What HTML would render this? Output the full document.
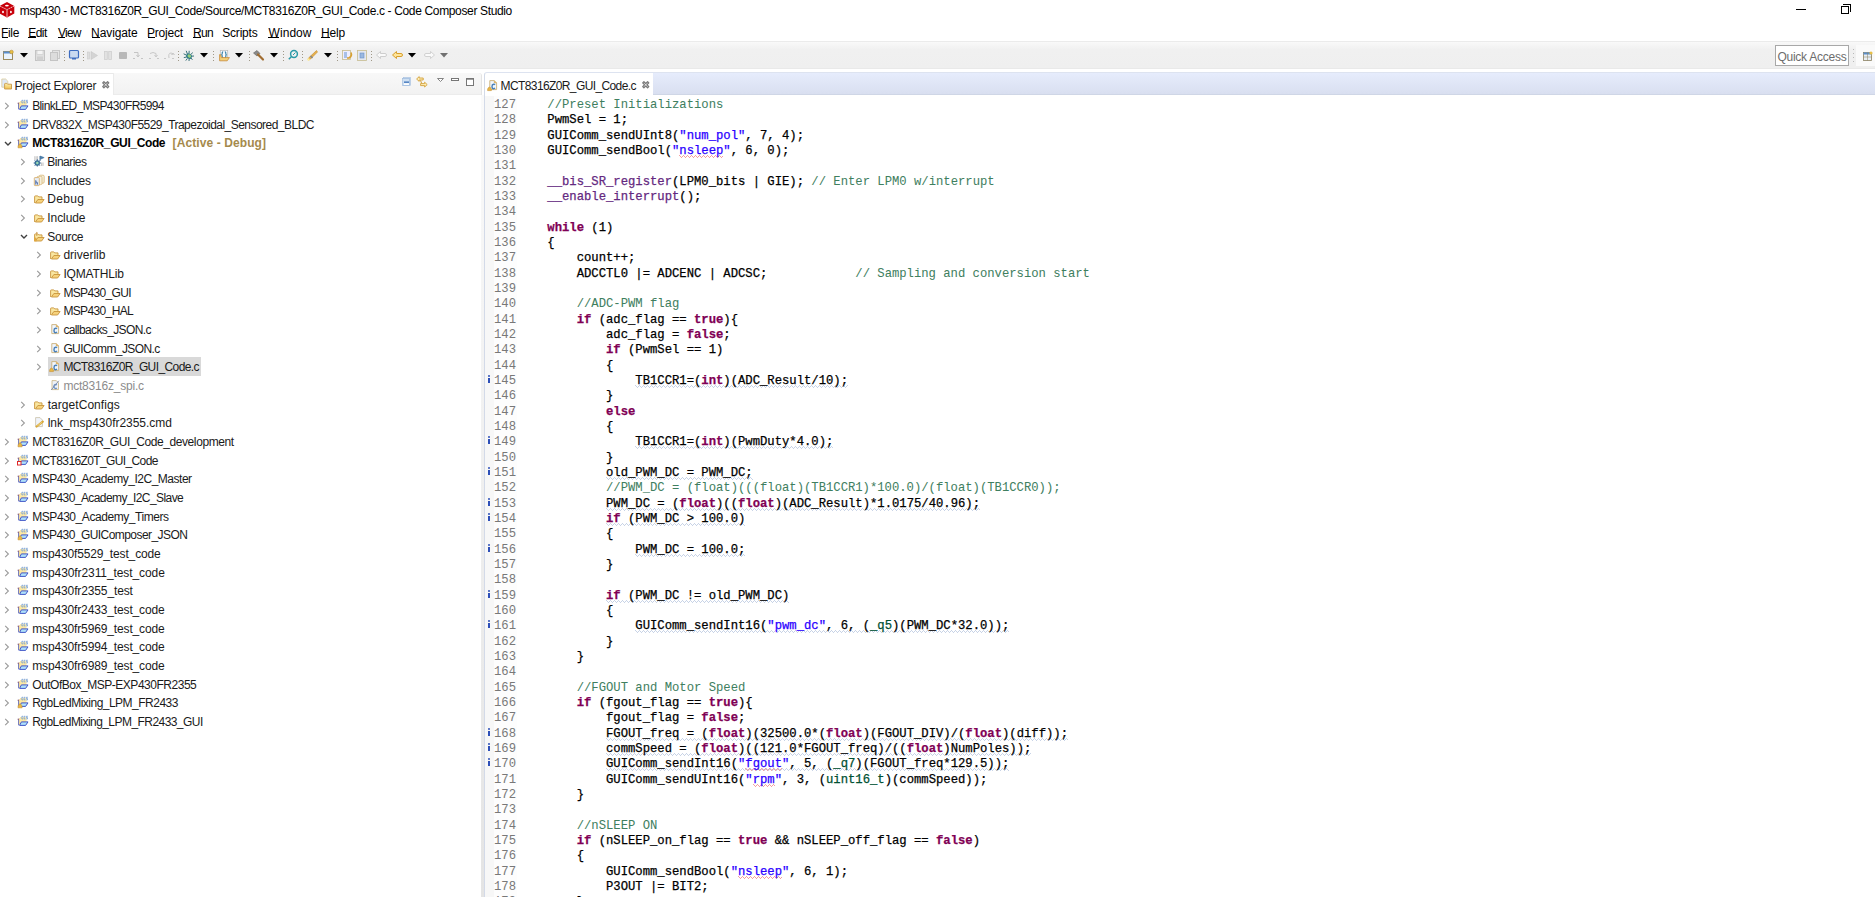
<!DOCTYPE html><html><head><meta charset="utf-8"><title>CCS</title><style>
*{margin:0;padding:0;box-sizing:border-box}
html,body{width:1875px;height:897px;overflow:hidden;background:#fff;position:relative}
body{font-family:"Liberation Sans",sans-serif;font-size:12px;color:#000}
.a{position:absolute;white-space:pre}
.ui{font-family:"Liberation Sans",sans-serif;font-size:12px;line-height:14px}
.code{font-family:"Liberation Mono",monospace;font-size:12.2222px;line-height:15.3333px;color:#000;-webkit-text-stroke:0.25px currentColor}
.k{color:#7f0055;font-weight:bold}
.s{color:#2a00ff}
.c{color:#3f7f5f;-webkit-text-stroke-width:0.05px}
.t{color:#005032}
.m{color:#642880}
.ln{font-family:"Liberation Mono",monospace;font-size:12.2222px;line-height:15.3333px;color:#787878;text-align:right;width:40px}
.u{text-decoration:underline wavy #b4c4dc;text-decoration-thickness:1px;text-underline-offset:2px;text-decoration-skip-ink:none}
.r{text-decoration:underline wavy #f08080;text-decoration-thickness:1px;text-underline-offset:2px;text-decoration-skip-ink:none}
.mu{text-decoration:underline;text-underline-offset:0px}
svg{position:absolute;overflow:visible}
</style></head><body><svg style="left:0;top:0" width="16" height="19" viewBox="0 0 16 19">
<path d="M7 2 L14.3 5.9 L14.3 13.6 L7 17.6 L-0.3 13.6 L-0.3 5.9 Z" fill="#c8000a"/>
<path d="M0.3 6.3 L7 9.6 L13.7 6.3" stroke="#fff" stroke-width="1" stroke-dasharray="1.3 1" fill="none"/>
<path d="M7 9.8 L7 17.4" stroke="#e89090" stroke-width="1.3"/>
<ellipse cx="6.9" cy="5.6" rx="1.9" ry="0.85" fill="#fff"/>
<ellipse cx="3" cy="12" rx="0.9" ry="1.3" fill="#fff"/>
<ellipse cx="10.9" cy="12" rx="0.9" ry="1.3" fill="#fff"/>
</svg><div class="a ui" id="title" style="left:19.80px;top:4.000px;letter-spacing:-0.351px;">msp430 - MCT8316Z0R_GUI_Code/Source/MCT8316Z0R_GUI_Code.c - Code Composer Studio</div><div class="a" style="left:1796px;top:9px;width:10px;height:1px;background:#000"></div><div class="a" style="left:1841px;top:6px;width:8px;height:8px;border:1px solid #000;background:#fff"></div><div class="a" style="left:1843px;top:4px;width:8px;height:1px;background:#000"></div><div class="a" style="left:1850px;top:4px;width:1px;height:8px;background:#000"></div><div class="a ui" id="menu0" style="left:1.00px;top:26.000px;letter-spacing:-0.334px;">File</div><div class="a" style="left:2px;top:37px;width:6px;height:1px;background:#000"></div><div class="a ui" id="menu1" style="left:28.20px;top:26.000px;letter-spacing:-0.500px;">Edit</div><div class="a" style="left:28px;top:37px;width:8px;height:1px;background:#000"></div><div class="a ui" id="menu2" style="left:58.10px;top:26.000px;letter-spacing:-0.800px;">View</div><div class="a" style="left:58px;top:37px;width:7px;height:1px;background:#000"></div><div class="a ui" id="menu3" style="left:91.10px;top:26.000px;letter-spacing:-0.101px;">Navigate</div><div class="a" style="left:92px;top:37px;width:8px;height:1px;background:#000"></div><div class="a ui" id="menu4" style="left:147.00px;top:26.000px;letter-spacing:-0.200px;">Project</div><div class="a" style="left:148px;top:37px;width:7px;height:1px;background:#000"></div><div class="a ui" id="menu5" style="left:192.90px;top:26.000px;letter-spacing:-0.650px;">Run</div><div class="a" style="left:193px;top:37px;width:8px;height:1px;background:#000"></div><div class="a ui" id="menu6" style="left:222.30px;top:26.000px;letter-spacing:-0.217px;">Scripts</div><div class="a ui" id="menu7" style="left:268.60px;top:26.000px;letter-spacing:0.040px;">Window</div><div class="a" style="left:268px;top:37px;width:11px;height:1px;background:#000"></div><div class="a ui" id="menu8" style="left:320.90px;top:26.000px;letter-spacing:-0.100px;">Help</div><div class="a" style="left:321px;top:37px;width:9px;height:1px;background:#000"></div><div class="a" style="left:0;top:41px;width:1875px;height:28px;border-top:1px solid #ebebeb;border-bottom:1px solid #e9e9e9;background:linear-gradient(#f9f9f9,#f0f0f0 30%,#efefef)"></div><div class="a" style="left:0;top:69px;width:1875px;height:4px;background:#fff"></div><svg style="left:3px;top:50px" width="11" height="11" viewBox="0 0 11 11"><rect x="0.5" y="1.5" width="9" height="8" fill="#eaf3fc" stroke="#9c8a5c"/><rect x="0.5" y="1.5" width="9" height="2" fill="#5a8fd0"/><circle cx="8.5" cy="2" r="1.8" fill="#e8c048" stroke="#b08020" stroke-width="0.5"/></svg><svg style="left:20px;top:53px" width="8" height="5" viewBox="0 0 8 5"><path d="M0 0H8L4 4.5Z" fill="#000"/></svg><svg style="left:35px;top:50px" width="10" height="11" viewBox="0 0 10 11"><rect x="0.5" y="0.5" width="9" height="10" fill="#e0e0e0" stroke="#c4c4c4"/><rect x="2" y="0.5" width="6" height="4" fill="#f4f4f4" stroke="#c8c8c8" stroke-width="0.6"/><rect x="2" y="6.5" width="6" height="4" fill="#d0d0d0"/></svg><svg style="left:50px;top:50px" width="10" height="11" viewBox="0 0 10 11"><rect x="2.5" y="0.5" width="7" height="8" fill="#e4e4e4" stroke="#c8c8c8"/><rect x="0.5" y="2.5" width="7" height="8" fill="#dcdcdc" stroke="#c4c4c4"/></svg><div class="a" style="left:64px;top:51px;width:1px;height:11px;background:repeating-linear-gradient(#a09888 0 1px,transparent 1px 3px)"></div><svg style="left:69px;top:50px" width="10" height="10" viewBox="0 0 10 10"><rect x="0.5" y="0.5" width="9" height="7.5" rx="1" fill="#c9d9f0" stroke="#3d6cc0" stroke-width="1.2"/><rect x="3" y="8" width="4" height="1.5" fill="#3d6cc0"/></svg><div class="a" style="left:83px;top:51px;width:1px;height:11px;background:repeating-linear-gradient(#a09888 0 1px,transparent 1px 3px)"></div><svg style="left:87px;top:51px" width="11" height="9" viewBox="0 0 11 9"><rect x="0.5" y="1" width="2" height="7" fill="#ddd" stroke="#ccc" stroke-width="0.6"/><path d="M4 0.5 L10.5 4.5 L4 8.5Z" fill="#d4d4d4" stroke="#c8c8c8" stroke-width="0.6"/></svg><svg style="left:104px;top:51px" width="8" height="9" viewBox="0 0 8 9"><rect x="0.5" y="0.5" width="2.8" height="8" fill="#e2e2e2" stroke="#cfcfcf" stroke-width="0.8"/><rect x="4.7" y="0.5" width="2.8" height="8" fill="#e2e2e2" stroke="#cfcfcf" stroke-width="0.8"/></svg><svg style="left:119px;top:52px" width="8" height="7" viewBox="0 0 8 7"><rect x="0" y="0" width="8" height="7" rx="0.8" fill="#b8b8b8"/></svg><svg style="left:133px;top:52px" width="11" height="7" viewBox="0 0 11 7"><path d="M1 0.5 H5 V4 M3.5 3 L5 5 L6.5 3 M0 6.5 H2 M8 6.5 H10" stroke="#c4c4c4" fill="none" stroke-width="1"/></svg><svg style="left:149px;top:52px" width="11" height="7" viewBox="0 0 11 7"><path d="M1 1.5 Q4 -0.5 7 1.5 V4 M5.5 3 L7 5 L8.5 3 M0 6.5 H2 M8 6.5 H10" stroke="#c8c8c8" fill="none" stroke-width="1"/></svg><svg style="left:164px;top:52px" width="11" height="7" viewBox="0 0 11 7"><path d="M5 6 Q4 1 7 1 Q9 1 9 3 M7.5 3 L9 1 L10.5 3 M0 6.5 H2 M8 6.5 H10" stroke="#c8c8c8" fill="none" stroke-width="1"/></svg><div class="a" style="left:178px;top:51px;width:1px;height:11px;background:repeating-linear-gradient(#a09888 0 1px,transparent 1px 3px)"></div><svg style="left:183px;top:50px" width="12" height="12" viewBox="0 0 12 12"><path d="M3.2 0.8 L4.4 4 M6.2 0.8 L6 3.6 M0.6 3.8 L3.6 5.2 M0.8 7.6 L3.6 7 M2.8 10.6 L4.4 8.4 M6 11 L6.2 8.6 M9.4 9.8 L7.8 7.8 M11 6 L8.4 6.2 M9.8 2.6 L7.8 4.4" stroke="#3a7078" stroke-width="1"/><ellipse cx="6" cy="6.2" rx="3" ry="2.6" transform="rotate(35 6 6.2)" fill="#2f7a88"/><ellipse cx="6.3" cy="6" rx="1.9" ry="1.5" transform="rotate(35 6.3 6)" fill="#9ad07a"/></svg><svg style="left:200px;top:53px" width="8" height="5" viewBox="0 0 8 5"><path d="M0 0H8L4 4.5Z" fill="#000"/></svg><div class="a" style="left:213px;top:51px;width:1px;height:11px;background:repeating-linear-gradient(#a09888 0 1px,transparent 1px 3px)"></div><svg style="left:219px;top:50px" width="11" height="12" viewBox="0 0 11 12"><rect x="1.3" y="0.5" width="7.4" height="8" fill="#fafcff" stroke="#b8b8b8" stroke-width="0.7"/><path d="M4.2 1.8 Q3 1.8 3.2 3.6 Q3.2 4.6 2.4 4.8 Q3.2 5 3.2 6 Q3 7.6 4.2 7.6 M5.8 1.8 Q7 1.8 6.8 3.6 Q6.8 4.6 7.6 4.8 Q6.8 5 6.8 6 Q7 7.6 5.8 7.6" stroke="#2a78a0" stroke-width="1.1" fill="none"/><path d="M0.6 4.6 V10.8 H8.2 L10.4 7.6 H2.4 L1.6 4.6Z" fill="#f4d078" stroke="#c88a38" stroke-width="0.8" stroke-linejoin="round"/></svg><svg style="left:235px;top:53px" width="8" height="5" viewBox="0 0 8 5"><path d="M0 0H8L4 4.5Z" fill="#000"/></svg><div class="a" style="left:249px;top:51px;width:1px;height:11px;background:repeating-linear-gradient(#a09888 0 1px,transparent 1px 3px)"></div><svg style="left:253px;top:50px" width="11" height="11" viewBox="0 0 11 11"><path d="M0.5 3 L4 0.5 L7 3.5 L4 6Z" fill="#8a8a8a" stroke="#606060" stroke-width="0.6"/><path d="M5 4.5 L10 9.5" stroke="#a06c30" stroke-width="2.2" stroke-linecap="round"/></svg><svg style="left:270px;top:53px" width="8" height="5" viewBox="0 0 8 5"><path d="M0 0H8L4 4.5Z" fill="#000"/></svg><div class="a" style="left:283px;top:51px;width:1px;height:11px;background:repeating-linear-gradient(#a09888 0 1px,transparent 1px 3px)"></div><svg style="left:288px;top:50px" width="10" height="10" viewBox="0 0 10 10"><circle cx="6" cy="4" r="3.4" fill="none" stroke="#2a9aa8" stroke-width="1.5"/><path d="M3.5 6.5 L0.8 9.2" stroke="#2a9aa8" stroke-width="1.5"/><path d="M5 5 L7.5 2.5" stroke="#2a9aa8" stroke-width="1"/></svg><div class="a" style="left:302px;top:51px;width:1px;height:11px;background:repeating-linear-gradient(#a09888 0 1px,transparent 1px 3px)"></div><svg style="left:307px;top:50px" width="11" height="11" viewBox="0 0 11 11"><path d="M9.5 0.5 L10.5 2 L3 9.5 L1 10 L1.5 8 Z" fill="#e8b04a" stroke="#c08a30" stroke-width="0.6"/><path d="M3.5 6 L5.5 8" stroke="#888" stroke-width="1.6"/><circle cx="1.5" cy="9.5" r="1.2" fill="#fff0a0"/></svg><svg style="left:324px;top:53px" width="8" height="5" viewBox="0 0 8 5"><path d="M0 0H8L4 4.5Z" fill="#000"/></svg><div class="a" style="left:337px;top:51px;width:1px;height:11px;background:repeating-linear-gradient(#a09888 0 1px,transparent 1px 3px)"></div><svg style="left:342px;top:50px" width="11" height="10" viewBox="0 0 11 10"><rect x="0.5" y="0.5" width="8" height="9" fill="#eef" stroke="#c8bc90" stroke-width="0.8"/><rect x="2" y="2" width="3" height="6" fill="#a8c0e8"/><path d="M9 2.5 Q10.5 6 7 8 L5 8" stroke="#d8a030" stroke-width="1.6" fill="none"/></svg><svg style="left:357px;top:50px" width="10" height="11" viewBox="0 0 10 11"><rect x="0.5" y="0.5" width="9" height="10" fill="#e4e8f0" stroke="#c8bc90" stroke-width="0.8"/><rect x="3" y="3" width="4" height="5" fill="#9ab8e0" stroke="#6a90c8" stroke-width="0.6"/></svg><div class="a" style="left:371px;top:51px;width:1px;height:11px;background:repeating-linear-gradient(#a09888 0 1px,transparent 1px 3px)"></div><svg style="left:376px;top:51px" width="11" height="9" viewBox="0 0 11 9"><path d="M0.5 4 L4.5 0.5 V2.5 H9 Q10.5 2.5 10.5 4 Q10.5 5.5 9 5.5 H4.5 V7.5Z" fill="#fafafa" stroke="#c4c4c4" stroke-width="0.8"/></svg><svg style="left:392px;top:51px" width="11" height="9" viewBox="0 0 11 9"><path d="M0.5 4 L4.5 0.5 V2.5 H9 Q10.5 2.5 10.5 4 Q10.5 5.5 9 5.5 H4.5 V7.5Z" fill="#ffe59a" stroke="#d8a030" stroke-width="1"/></svg><svg style="left:408px;top:53px" width="8" height="5" viewBox="0 0 8 5"><path d="M0 0H8L4 4.5Z" fill="#000"/></svg><svg style="left:424px;top:51px" width="11" height="9" viewBox="0 0 11 9"><path d="M10.5 4 L6.5 0.5 V2.5 H2 Q0.5 2.5 0.5 4 Q0.5 5.5 2 5.5 H6.5 V7.5Z" fill="#fafafa" stroke="#c8c8c8" stroke-width="0.8"/></svg><svg style="left:440px;top:53px" width="8" height="5" viewBox="0 0 8 5"><path d="M0 0H8L4 4.5Z" fill="#707070"/></svg><div class="a" style="left:1775px;top:45px;width:74px;height:21px;border:1px solid #a8a8a8;background:#fff"></div><div class="a ui" id="qa" style="left:1777.40px;top:50.000px;letter-spacing:-0.246px;color:#6d6d6d">Quick Access</div><div class="a" style="left:1853px;top:49px;width:1px;height:15px;background:repeating-linear-gradient(#b8b8b8 0 1px,transparent 1px 4px)"></div><div class="a" style="left:1856px;top:45px;width:19px;height:21px;background:#fafafa"></div><svg style="left:1863px;top:51px" width="10" height="10" viewBox="0 0 10 10"><rect x="0.5" y="1.5" width="8" height="8" fill="#e8eef4" stroke="#8a8060" stroke-width="0.8"/><rect x="0.5" y="1.5" width="8" height="2" fill="#5b8fcb"/><path d="M4.5 1.5V9.5M0.5 6H8.5" stroke="#8a8060" stroke-width="0.5"/><circle cx="8" cy="2" r="1.6" fill="#e8c048"/></svg><div class="a" style="left:0;top:73px;width:482px;height:824px;border-right:1px solid #e4e4e4;border-top:1px solid #e9e9e9;border-top-right-radius:3px;background:#fff"></div><div class="a" style="left:114px;top:73px;width:367px;height:22px;background:linear-gradient(#f8f8f8,#f2f2f2);border-bottom:1px solid #ececec;border-top-right-radius:3px"></div><div class="a" style="left:113px;top:73px;width:1px;height:22px;background:#ebebeb"></div><svg style="left:0px;top:77px" width="13" height="13" viewBox="0 0 13 13"><defs><linearGradient id="fg" x1="0" y1="0" x2="0" y2="1"><stop offset="0" stop-color="#fdf0b0"/><stop offset="1" stop-color="#f0c050"/></linearGradient></defs><path d="M1.8 2 H5.6 L7.8 4.2 V10.2 H1.8Z" fill="#dfe8f6" stroke="#dccc98" stroke-width="0.8"/><path d="M4.6 12 V7.1 Q4.6 6.4 5.3 6.4 H6.8 L7.6 7.2 H11.5 V12Z" fill="url(#fg)" stroke="#c89848" stroke-width="0.9" stroke-linejoin="round"/></svg><div class="a ui" id="pe" style="left:14.60px;top:79.000px;letter-spacing:-0.233px;color:#222">Project Explorer</div><svg style="left:101.8px;top:80.8px" width="8" height="8" viewBox="0 0 8 8"><path d="M0.7 1.9 L1.9 0.7 L3.75 2.55 L5.6 0.7 L6.8 1.9 L4.95 3.75 L6.8 5.6 L5.6 6.8 L3.75 4.95 L1.9 6.8 L0.7 5.6 L2.55 3.75Z" fill="#fff" stroke="#7a7a7a" stroke-width="1.25" stroke-linejoin="round"/></svg><svg style="left:402px;top:77px" width="9" height="9" viewBox="0 0 9 9"><rect x="1.5" y="0.5" width="7" height="8" fill="#bcd4ec" stroke="#a8c0e0" stroke-width="0.6"/><rect x="0.5" y="1.5" width="7" height="7" fill="#cfe0f2" stroke="#9ab8dc" stroke-width="0.6"/><rect x="2" y="4.5" width="5" height="1.3" fill="#3a70b8"/><rect x="2" y="6.3" width="5" height="1.6" fill="#fff"/></svg><svg style="left:416px;top:76px" width="12" height="12" viewBox="0 0 12 12"><path d="M0.6 3 L3.2 0.6 V2 H7.2 V4 H3.2 V5.4Z" fill="#fdeeb8" stroke="#d4a038" stroke-width="0.9" stroke-linejoin="round"/><path d="M11.2 8.6 L8.6 6.2 V7.6 H4.6 V9.6 H8.6 V11Z" fill="#fdeeb8" stroke="#d4a038" stroke-width="0.9" stroke-linejoin="round"/><path d="M4.5 4.3 L5.6 7.3" stroke="#d4a038" stroke-width="1"/></svg><svg style="left:437px;top:78px" width="7" height="4" viewBox="0 0 7 4"><path d="M0.5 0.5 H6.5 L3.5 3.5Z" fill="#fff" stroke="#777" stroke-width="0.9"/></svg><svg style="left:451px;top:78px" width="8" height="3" viewBox="0 0 8 3"><rect x="0.5" y="0.5" width="7" height="2" fill="#fff" stroke="#777" stroke-width="1"/></svg><svg style="left:466px;top:78px" width="8" height="8" viewBox="0 0 8 8"><rect x="0.5" y="0.5" width="7" height="7" fill="#fff" stroke="#777" stroke-width="1"/><rect x="0.5" y="0.5" width="7" height="1.2" fill="#777"/></svg><svg style="left:4px;top:102px" width="6" height="8" viewBox="0 0 6 8"><path d="M1.2 0.8 L4.4 4 L1.2 7.2" stroke="#9a9a9a" stroke-width="1.1" fill="none"/></svg><svg style="left:17px;top:99px" width="12" height="12" viewBox="0 0 12 12"><path d="M1.6 4.2 V10.3" stroke="#5060c8" stroke-width="1"/><circle cx="1.3" cy="4.3" r="0.7" fill="#7a4870"/><path d="M2.2 10.5 V4 L3.8 2.2 H9.5 V7.5 H4Z" fill="#fce8a4"/><path d="M2.2 10 V4 L3.8 2.2" stroke="#e8c880" stroke-width="0.6" fill="none"/><g stroke="#7aa2d4" stroke-width="0.9" fill="none"><path d="M6.2 1.3 H4.9 V3.9 H6.2"/><path d="M8.4 1.3 H7.1 V3.9 H8.4"/><path d="M10.8 1.3 H9.4 V2.6 H10.5 V3.9 H9.2"/></g><path d="M2.6 10.4 H8.6 L11 6.9 H4.4Z" fill="#aee0fa" stroke="#4458c8" stroke-width="1" stroke-linejoin="round"/></svg><div class="a ui" id="tree0" style="left:32.20px;top:99.000px;letter-spacing:-0.620px;color:#1a1a1a">BlinkLED_MSP430FR5994</div><svg style="left:4px;top:121px" width="6" height="8" viewBox="0 0 6 8"><path d="M1.2 0.8 L4.4 4 L1.2 7.2" stroke="#9a9a9a" stroke-width="1.1" fill="none"/></svg><svg style="left:17px;top:118px" width="12" height="12" viewBox="0 0 12 12"><path d="M1.6 4.2 V10.3" stroke="#5060c8" stroke-width="1"/><circle cx="1.3" cy="4.3" r="0.7" fill="#7a4870"/><path d="M2.2 10.5 V4 L3.8 2.2 H9.5 V7.5 H4Z" fill="#fce8a4"/><path d="M2.2 10 V4 L3.8 2.2" stroke="#e8c880" stroke-width="0.6" fill="none"/><g stroke="#7aa2d4" stroke-width="0.9" fill="none"><path d="M6.2 1.3 H4.9 V3.9 H6.2"/><path d="M8.4 1.3 H7.1 V3.9 H8.4"/><path d="M10.8 1.3 H9.4 V2.6 H10.5 V3.9 H9.2"/></g><path d="M2.6 10.4 H8.6 L11 6.9 H4.4Z" fill="#aee0fa" stroke="#4458c8" stroke-width="1" stroke-linejoin="round"/></svg><div class="a ui" id="tree1" style="left:32.20px;top:117.667px;letter-spacing:-0.529px;color:#1a1a1a">DRV832X_MSP430F5529_Trapezoidal_Sensored_BLDC</div><svg style="left:3.5px;top:141px" width="8" height="5" viewBox="0 0 8 5"><path d="M1 1 L4 4 L7 1" stroke="#404040" stroke-width="1.4" fill="none"/></svg><svg style="left:17px;top:136px" width="12" height="12" viewBox="0 0 12 12"><path d="M1.6 4.2 V10.3" stroke="#5060c8" stroke-width="1"/><circle cx="1.3" cy="4.3" r="0.7" fill="#7a4870"/><path d="M2.2 10.5 V4 L3.8 2.2 H9.5 V7.5 H4Z" fill="#fce8a4"/><path d="M2.2 10 V4 L3.8 2.2" stroke="#e8c880" stroke-width="0.6" fill="none"/><g stroke="#7aa2d4" stroke-width="0.9" fill="none"><path d="M6.2 1.3 H4.9 V3.9 H6.2"/><path d="M8.4 1.3 H7.1 V3.9 H8.4"/><path d="M10.8 1.3 H9.4 V2.6 H10.5 V3.9 H9.2"/></g><path d="M2.6 10.4 H8.6 L11 6.9 H4.4Z" fill="#aee0fa" stroke="#4458c8" stroke-width="1" stroke-linejoin="round"/><path d="M1 11.8 Q0.8 9.5 2 8.4 Q3 7.2 4.1 8.4 Q5.3 9.5 5.1 11.8Z" fill="#e8b848" stroke="#c89030" stroke-width="0.6"/></svg><div class="a ui" id="tree2" style="left:32.20px;top:136.333px;letter-spacing:-0.372px;font-weight:bold">MCT8316Z0R_GUI_Code</div><div class="a ui" id="active" style="left:172.60px;top:136.333px;letter-spacing:0.094px;font-weight:bold;color:#a58a4c">[Active - Debug]</div><svg style="left:20px;top:158px" width="6" height="8" viewBox="0 0 6 8"><path d="M1.2 0.8 L4.4 4 L1.2 7.2" stroke="#9a9a9a" stroke-width="1.1" fill="none"/></svg><svg style="left:33px;top:155px" width="12" height="12" viewBox="0 0 12 12"><path d="M1.8 1.2 V5 M3.2 1.2 V5 M4.6 1.2 V5" stroke="#b8b8b8" stroke-width="0.8"/><path d="M7.2 1 L11.2 2.6 L7.2 4.4Z" fill="#4a82b0" stroke="#3a6a98" stroke-width="0.5"/><path d="M7 1 V6" stroke="#3a6a98" stroke-width="0.8"/><path d="M0.6 8 H8 M4.3 4.2 V11.6 M1.6 5.4 L7 10.8 M7 5.4 L1.6 10.8" stroke="#2f5f90" stroke-width="0.8"/><circle cx="4.3" cy="8" r="2.5" fill="#3f7aa0" stroke="#2a5a88" stroke-width="0.6"/><circle cx="4.3" cy="8" r="1.2" fill="#9ad8b0"/><path d="M8.6 7.5 V11 M10 7.5 V11" stroke="#b0b0b0" stroke-width="0.8"/></svg><div class="a ui" id="tree3" style="left:47.30px;top:155.000px;letter-spacing:-0.529px;color:#1a1a1a">Binaries</div><svg style="left:20px;top:177px" width="6" height="8" viewBox="0 0 6 8"><path d="M1.2 0.8 L4.4 4 L1.2 7.2" stroke="#9a9a9a" stroke-width="1.1" fill="none"/></svg><svg style="left:33px;top:174px" width="12" height="12" viewBox="0 0 12 12"><rect x="6.2" y="1.2" width="5" height="8" rx="1.2" fill="#f6f0dc" stroke="#d8b878" stroke-width="0.8"/><rect x="4" y="2.3" width="5" height="8.3" rx="1.2" fill="#f6f0dc" stroke="#d8b878" stroke-width="0.8"/><rect x="1.3" y="3.6" width="5" height="8" rx="0.6" fill="#e6eef8" stroke="#d8b070" stroke-width="0.9"/><path d="M2.8 6.2 V10.6 M2.8 8 Q4.6 7 4.6 10.6" stroke="#3a5ca0" stroke-width="0.9" fill="none"/></svg><div class="a ui" id="tree4" style="left:47.30px;top:173.667px;letter-spacing:-0.143px;color:#1a1a1a">Includes</div><svg style="left:20px;top:195px" width="6" height="8" viewBox="0 0 6 8"><path d="M1.2 0.8 L4.4 4 L1.2 7.2" stroke="#9a9a9a" stroke-width="1.1" fill="none"/></svg><svg style="left:33px;top:192px" width="12" height="12" viewBox="0 0 12 12"><path d="M1.6 11 V4.6 Q1.6 3.9 2.3 3.9 H4.8 L5.8 4.9 H9 V7.5" fill="#f9e6a0" stroke="#c8943c" stroke-width="0.9" stroke-linejoin="round"/><path d="M2.4 11 H8.6 L11.1 7.5 H4.9Z" fill="#f6d27c" stroke="#c8943c" stroke-width="0.9" stroke-linejoin="round"/></svg><div class="a ui" id="tree5" style="left:47.30px;top:192.333px;letter-spacing:0.325px;color:#1a1a1a">Debug</div><svg style="left:20px;top:214px" width="6" height="8" viewBox="0 0 6 8"><path d="M1.2 0.8 L4.4 4 L1.2 7.2" stroke="#9a9a9a" stroke-width="1.1" fill="none"/></svg><svg style="left:33px;top:211px" width="12" height="12" viewBox="0 0 12 12"><path d="M1.6 11 V4.6 Q1.6 3.9 2.3 3.9 H4.8 L5.8 4.9 H9 V7.5" fill="#f9e6a0" stroke="#c8943c" stroke-width="0.9" stroke-linejoin="round"/><path d="M2.4 11 H8.6 L11.1 7.5 H4.9Z" fill="#f6d27c" stroke="#c8943c" stroke-width="0.9" stroke-linejoin="round"/></svg><div class="a ui" id="tree6" style="left:47.30px;top:211.000px;letter-spacing:-0.083px;color:#1a1a1a">Include</div><svg style="left:19.5px;top:234px" width="8" height="5" viewBox="0 0 8 5"><path d="M1 1 L4 4 L7 1" stroke="#404040" stroke-width="1.4" fill="none"/></svg><svg style="left:33px;top:230px" width="12" height="12" viewBox="0 0 12 12"><path d="M1.6 11 V4.6 Q1.6 3.9 2.3 3.9 H4.8 L5.8 4.9 H9 V7.5" fill="#f9e6a0" stroke="#c8943c" stroke-width="0.9" stroke-linejoin="round"/><path d="M2.4 11 H8.6 L11.1 7.5 H4.9Z" fill="#f6d27c" stroke="#c8943c" stroke-width="0.9" stroke-linejoin="round"/><path d="M3.2 2.8 Q3.6 2 4.4 2.6 M3.8 2.4 V6" stroke="#c89040" stroke-width="0.8" fill="none"/><path d="M1 11.4 V8 Q2.2 6.8 3.4 8 V11.4Z" fill="#e0a840"/></svg><div class="a ui" id="tree7" style="left:47.30px;top:229.667px;letter-spacing:-0.360px;color:#1a1a1a">Source</div><svg style="left:36px;top:251px" width="6" height="8" viewBox="0 0 6 8"><path d="M1.2 0.8 L4.4 4 L1.2 7.2" stroke="#9a9a9a" stroke-width="1.1" fill="none"/></svg><svg style="left:49px;top:248px" width="12" height="12" viewBox="0 0 12 12"><path d="M1.6 11 V4.6 Q1.6 3.9 2.3 3.9 H4.8 L5.8 4.9 H9 V7.5" fill="#f9e6a0" stroke="#c8943c" stroke-width="0.9" stroke-linejoin="round"/><path d="M2.4 11 H8.6 L11.1 7.5 H4.9Z" fill="#f6d27c" stroke="#c8943c" stroke-width="0.9" stroke-linejoin="round"/></svg><div class="a ui" id="tree8" style="left:63.40px;top:248.333px;letter-spacing:0.000px;color:#1a1a1a">driverlib</div><svg style="left:36px;top:270px" width="6" height="8" viewBox="0 0 6 8"><path d="M1.2 0.8 L4.4 4 L1.2 7.2" stroke="#9a9a9a" stroke-width="1.1" fill="none"/></svg><svg style="left:49px;top:267px" width="12" height="12" viewBox="0 0 12 12"><path d="M1.6 11 V4.6 Q1.6 3.9 2.3 3.9 H4.8 L5.8 4.9 H9 V7.5" fill="#f9e6a0" stroke="#c8943c" stroke-width="0.9" stroke-linejoin="round"/><path d="M2.4 11 H8.6 L11.1 7.5 H4.9Z" fill="#f6d27c" stroke="#c8943c" stroke-width="0.9" stroke-linejoin="round"/></svg><div class="a ui" id="tree9" style="left:63.40px;top:267.000px;letter-spacing:-0.161px;color:#1a1a1a">IQMATHLib</div><svg style="left:36px;top:289px" width="6" height="8" viewBox="0 0 6 8"><path d="M1.2 0.8 L4.4 4 L1.2 7.2" stroke="#9a9a9a" stroke-width="1.1" fill="none"/></svg><svg style="left:49px;top:286px" width="12" height="12" viewBox="0 0 12 12"><path d="M1.6 11 V4.6 Q1.6 3.9 2.3 3.9 H4.8 L5.8 4.9 H9 V7.5" fill="#f9e6a0" stroke="#c8943c" stroke-width="0.9" stroke-linejoin="round"/><path d="M2.4 11 H8.6 L11.1 7.5 H4.9Z" fill="#f6d27c" stroke="#c8943c" stroke-width="0.9" stroke-linejoin="round"/></svg><div class="a ui" id="tree10" style="left:63.40px;top:285.667px;letter-spacing:-0.645px;color:#1a1a1a">MSP430_GUI</div><svg style="left:36px;top:307px" width="6" height="8" viewBox="0 0 6 8"><path d="M1.2 0.8 L4.4 4 L1.2 7.2" stroke="#9a9a9a" stroke-width="1.1" fill="none"/></svg><svg style="left:49px;top:304px" width="12" height="12" viewBox="0 0 12 12"><path d="M1.6 11 V4.6 Q1.6 3.9 2.3 3.9 H4.8 L5.8 4.9 H9 V7.5" fill="#f9e6a0" stroke="#c8943c" stroke-width="0.9" stroke-linejoin="round"/><path d="M2.4 11 H8.6 L11.1 7.5 H4.9Z" fill="#f6d27c" stroke="#c8943c" stroke-width="0.9" stroke-linejoin="round"/></svg><div class="a ui" id="tree11" style="left:63.40px;top:304.333px;letter-spacing:-0.633px;color:#1a1a1a">MSP430_HAL</div><svg style="left:36px;top:326px" width="6" height="8" viewBox="0 0 6 8"><path d="M1.2 0.8 L4.4 4 L1.2 7.2" stroke="#9a9a9a" stroke-width="1.1" fill="none"/></svg><svg style="left:49px;top:323px" width="12" height="12" viewBox="0 0 12 12"><path d="M2.8 1.6 H7.3 L9.6 3.9 V10.6 H2.8Z" fill="#f0f6fd" stroke="#cbb07a" stroke-width="0.9" stroke-linejoin="round"/><path d="M7.3 1.6 V3.9 H9.6" fill="#e8c070" stroke="#d0a050" stroke-width="0.6"/><path d="M8 5.8 Q7.4 5.1 6.6 5.2 Q5 5.4 5 7.4 Q5 9.6 6.6 9.7 Q7.4 9.7 8 9.1" stroke="#4a80b8" stroke-width="1.4" fill="none"/></svg><div class="a ui" id="tree12" style="left:63.40px;top:323.000px;letter-spacing:-0.621px;color:#1a1a1a">callbacks_JSON.c</div><svg style="left:36px;top:345px" width="6" height="8" viewBox="0 0 6 8"><path d="M1.2 0.8 L4.4 4 L1.2 7.2" stroke="#9a9a9a" stroke-width="1.1" fill="none"/></svg><svg style="left:49px;top:342px" width="12" height="12" viewBox="0 0 12 12"><path d="M2.8 1.6 H7.3 L9.6 3.9 V10.6 H2.8Z" fill="#f0f6fd" stroke="#cbb07a" stroke-width="0.9" stroke-linejoin="round"/><path d="M7.3 1.6 V3.9 H9.6" fill="#e8c070" stroke="#d0a050" stroke-width="0.6"/><path d="M8 5.8 Q7.4 5.1 6.6 5.2 Q5 5.4 5 7.4 Q5 9.6 6.6 9.7 Q7.4 9.7 8 9.1" stroke="#4a80b8" stroke-width="1.4" fill="none"/></svg><div class="a ui" id="tree13" style="left:63.40px;top:341.667px;letter-spacing:-0.600px;color:#1a1a1a">GUIComm_JSON.c</div><div class="a" style="left:48px;top:357px;width:153px;height:19px;background:#d9d9d9"></div><svg style="left:36px;top:363px" width="6" height="8" viewBox="0 0 6 8"><path d="M1.2 0.8 L4.4 4 L1.2 7.2" stroke="#9a9a9a" stroke-width="1.1" fill="none"/></svg><svg style="left:49px;top:360px" width="12" height="12" viewBox="0 0 12 12"><path d="M2.8 1.6 H7.3 L9.6 3.9 V10.6 H2.8Z" fill="#f0f6fd" stroke="#cbb07a" stroke-width="0.9" stroke-linejoin="round"/><path d="M7.3 1.6 V3.9 H9.6" fill="#e8c070" stroke="#d0a050" stroke-width="0.6"/><path d="M8 5.8 Q7.4 5.1 6.6 5.2 Q5 5.4 5 7.4 Q5 9.6 6.6 9.7 Q7.4 9.7 8 9.1" stroke="#4a80b8" stroke-width="1.4" fill="none"/><path d="M0.6 11.6 Q0.4 9.6 1.5 8.6 Q2.5 7.6 3.5 8.6 Q4.6 9.6 4.4 11.6Z" fill="#e8b848" stroke="#c89030" stroke-width="0.6"/></svg><div class="a ui" id="tree14" style="left:63.40px;top:360.333px;letter-spacing:-0.595px;color:#1a1a1a">MCT8316Z0R_GUI_Code.c</div><svg style="left:49px;top:379px" width="12" height="12" viewBox="0 0 12 12"><path d="M3 1.6 H7.3 L9.5 3.8 V10.6 H3Z" fill="#eef2f8" stroke="#c8b480" stroke-width="0.8"/><path d="M7.8 6 A1.8 2 0 1 0 7.8 9" stroke="#6a90c0" stroke-width="1.3" fill="none"/><path d="M2.2 11 L9.8 1.8" stroke="#7888a8" stroke-width="0.9"/></svg><div class="a ui" id="tree15" style="left:63.40px;top:379.000px;letter-spacing:-0.207px;color:#8c8c8c">mct8316z_spi.c</div><svg style="left:20px;top:401px" width="6" height="8" viewBox="0 0 6 8"><path d="M1.2 0.8 L4.4 4 L1.2 7.2" stroke="#9a9a9a" stroke-width="1.1" fill="none"/></svg><svg style="left:33px;top:398px" width="12" height="12" viewBox="0 0 12 12"><path d="M1.6 11 V4.6 Q1.6 3.9 2.3 3.9 H4.8 L5.8 4.9 H9 V7.5" fill="#f9e6a0" stroke="#c8943c" stroke-width="0.9" stroke-linejoin="round"/><path d="M2.4 11 H8.6 L11.1 7.5 H4.9Z" fill="#f6d27c" stroke="#c8943c" stroke-width="0.9" stroke-linejoin="round"/></svg><div class="a ui" id="tree16" style="left:47.70px;top:397.667px;letter-spacing:0.051px;color:#1a1a1a">targetConfigs</div><svg style="left:20px;top:419px" width="6" height="8" viewBox="0 0 6 8"><path d="M1.2 0.8 L4.4 4 L1.2 7.2" stroke="#9a9a9a" stroke-width="1.1" fill="none"/></svg><svg style="left:33px;top:416px" width="12" height="12" viewBox="0 0 12 12"><path d="M2.6 1.6 H7 L9.4 4 V10.6 H2.6Z" fill="#f0f4fa" stroke="#c8c0a8" stroke-width="0.8"/><path d="M3.6 10.5 L9.8 5.6" stroke="#d8a838" stroke-width="2.2" stroke-linecap="round"/><path d="M4.4 9.8 L8.8 6.3" stroke="#fce8a0" stroke-width="0.7"/></svg><div class="a ui" id="tree17" style="left:47.70px;top:416.333px;letter-spacing:-0.026px;color:#1a1a1a">lnk_msp430fr2355.cmd</div><svg style="left:4px;top:438px" width="6" height="8" viewBox="0 0 6 8"><path d="M1.2 0.8 L4.4 4 L1.2 7.2" stroke="#9a9a9a" stroke-width="1.1" fill="none"/></svg><svg style="left:17px;top:435px" width="12" height="12" viewBox="0 0 12 12"><path d="M1.6 4.2 V10.3" stroke="#5060c8" stroke-width="1"/><circle cx="1.3" cy="4.3" r="0.7" fill="#7a4870"/><path d="M2.2 10.5 V4 L3.8 2.2 H9.5 V7.5 H4Z" fill="#fce8a4"/><path d="M2.2 10 V4 L3.8 2.2" stroke="#e8c880" stroke-width="0.6" fill="none"/><g stroke="#7aa2d4" stroke-width="0.9" fill="none"><path d="M6.2 1.3 H4.9 V3.9 H6.2"/><path d="M8.4 1.3 H7.1 V3.9 H8.4"/><path d="M10.8 1.3 H9.4 V2.6 H10.5 V3.9 H9.2"/></g><path d="M2.6 10.4 H8.6 L11 6.9 H4.4Z" fill="#aee0fa" stroke="#4458c8" stroke-width="1" stroke-linejoin="round"/><path d="M1 11.8 Q0.8 9.5 2 8.4 Q3 7.2 4.1 8.4 Q5.3 9.5 5.1 11.8Z" fill="#e8b848" stroke="#c89030" stroke-width="0.6"/></svg><div class="a ui" id="tree18" style="left:32.20px;top:435.000px;letter-spacing:-0.406px;color:#1a1a1a">MCT8316Z0R_GUI_Code_development</div><svg style="left:4px;top:457px" width="6" height="8" viewBox="0 0 6 8"><path d="M1.2 0.8 L4.4 4 L1.2 7.2" stroke="#9a9a9a" stroke-width="1.1" fill="none"/></svg><svg style="left:17px;top:454px" width="12" height="12" viewBox="0 0 12 12"><path d="M1.6 4.2 V10.3" stroke="#5060c8" stroke-width="1"/><circle cx="1.3" cy="4.3" r="0.7" fill="#7a4870"/><path d="M2.2 10.5 V4 L3.8 2.2 H9.5 V7.5 H4Z" fill="#fce8a4"/><path d="M2.2 10 V4 L3.8 2.2" stroke="#e8c880" stroke-width="0.6" fill="none"/><g stroke="#7aa2d4" stroke-width="0.9" fill="none"><path d="M6.2 1.3 H4.9 V3.9 H6.2"/><path d="M8.4 1.3 H7.1 V3.9 H8.4"/><path d="M10.8 1.3 H9.4 V2.6 H10.5 V3.9 H9.2"/></g><path d="M2.6 10.4 H8.6 L11 6.9 H4.4Z" fill="#aee0fa" stroke="#4458c8" stroke-width="1" stroke-linejoin="round"/><rect x="0.5" y="7.5" width="3.5" height="3.5" fill="#fff" stroke="#e02828" stroke-width="1"/></svg><div class="a ui" id="tree19" style="left:32.20px;top:453.667px;letter-spacing:-0.622px;color:#1a1a1a">MCT8316Z0T_GUI_Code</div><svg style="left:4px;top:475px" width="6" height="8" viewBox="0 0 6 8"><path d="M1.2 0.8 L4.4 4 L1.2 7.2" stroke="#9a9a9a" stroke-width="1.1" fill="none"/></svg><svg style="left:17px;top:472px" width="12" height="12" viewBox="0 0 12 12"><path d="M1.6 4.2 V10.3" stroke="#5060c8" stroke-width="1"/><circle cx="1.3" cy="4.3" r="0.7" fill="#7a4870"/><path d="M2.2 10.5 V4 L3.8 2.2 H9.5 V7.5 H4Z" fill="#fce8a4"/><path d="M2.2 10 V4 L3.8 2.2" stroke="#e8c880" stroke-width="0.6" fill="none"/><g stroke="#7aa2d4" stroke-width="0.9" fill="none"><path d="M6.2 1.3 H4.9 V3.9 H6.2"/><path d="M8.4 1.3 H7.1 V3.9 H8.4"/><path d="M10.8 1.3 H9.4 V2.6 H10.5 V3.9 H9.2"/></g><path d="M2.6 10.4 H8.6 L11 6.9 H4.4Z" fill="#aee0fa" stroke="#4458c8" stroke-width="1" stroke-linejoin="round"/></svg><div class="a ui" id="tree20" style="left:32.20px;top:472.333px;letter-spacing:-0.479px;color:#1a1a1a">MSP430_Academy_I2C_Master</div><svg style="left:4px;top:494px" width="6" height="8" viewBox="0 0 6 8"><path d="M1.2 0.8 L4.4 4 L1.2 7.2" stroke="#9a9a9a" stroke-width="1.1" fill="none"/></svg><svg style="left:17px;top:491px" width="12" height="12" viewBox="0 0 12 12"><path d="M1.6 4.2 V10.3" stroke="#5060c8" stroke-width="1"/><circle cx="1.3" cy="4.3" r="0.7" fill="#7a4870"/><path d="M2.2 10.5 V4 L3.8 2.2 H9.5 V7.5 H4Z" fill="#fce8a4"/><path d="M2.2 10 V4 L3.8 2.2" stroke="#e8c880" stroke-width="0.6" fill="none"/><g stroke="#7aa2d4" stroke-width="0.9" fill="none"><path d="M6.2 1.3 H4.9 V3.9 H6.2"/><path d="M8.4 1.3 H7.1 V3.9 H8.4"/><path d="M10.8 1.3 H9.4 V2.6 H10.5 V3.9 H9.2"/></g><path d="M2.6 10.4 H8.6 L11 6.9 H4.4Z" fill="#aee0fa" stroke="#4458c8" stroke-width="1" stroke-linejoin="round"/></svg><div class="a ui" id="tree21" style="left:32.20px;top:491.000px;letter-spacing:-0.573px;color:#1a1a1a">MSP430_Academy_I2C_Slave</div><svg style="left:4px;top:513px" width="6" height="8" viewBox="0 0 6 8"><path d="M1.2 0.8 L4.4 4 L1.2 7.2" stroke="#9a9a9a" stroke-width="1.1" fill="none"/></svg><svg style="left:17px;top:510px" width="12" height="12" viewBox="0 0 12 12"><path d="M1.6 4.2 V10.3" stroke="#5060c8" stroke-width="1"/><circle cx="1.3" cy="4.3" r="0.7" fill="#7a4870"/><path d="M2.2 10.5 V4 L3.8 2.2 H9.5 V7.5 H4Z" fill="#fce8a4"/><path d="M2.2 10 V4 L3.8 2.2" stroke="#e8c880" stroke-width="0.6" fill="none"/><g stroke="#7aa2d4" stroke-width="0.9" fill="none"><path d="M6.2 1.3 H4.9 V3.9 H6.2"/><path d="M8.4 1.3 H7.1 V3.9 H8.4"/><path d="M10.8 1.3 H9.4 V2.6 H10.5 V3.9 H9.2"/></g><path d="M2.6 10.4 H8.6 L11 6.9 H4.4Z" fill="#aee0fa" stroke="#4458c8" stroke-width="1" stroke-linejoin="round"/></svg><div class="a ui" id="tree22" style="left:32.20px;top:509.667px;letter-spacing:-0.435px;color:#1a1a1a">MSP430_Academy_Timers</div><svg style="left:4px;top:531px" width="6" height="8" viewBox="0 0 6 8"><path d="M1.2 0.8 L4.4 4 L1.2 7.2" stroke="#9a9a9a" stroke-width="1.1" fill="none"/></svg><svg style="left:17px;top:528px" width="12" height="12" viewBox="0 0 12 12"><path d="M1.6 4.2 V10.3" stroke="#5060c8" stroke-width="1"/><circle cx="1.3" cy="4.3" r="0.7" fill="#7a4870"/><path d="M2.2 10.5 V4 L3.8 2.2 H9.5 V7.5 H4Z" fill="#fce8a4"/><path d="M2.2 10 V4 L3.8 2.2" stroke="#e8c880" stroke-width="0.6" fill="none"/><g stroke="#7aa2d4" stroke-width="0.9" fill="none"><path d="M6.2 1.3 H4.9 V3.9 H6.2"/><path d="M8.4 1.3 H7.1 V3.9 H8.4"/><path d="M10.8 1.3 H9.4 V2.6 H10.5 V3.9 H9.2"/></g><path d="M2.6 10.4 H8.6 L11 6.9 H4.4Z" fill="#aee0fa" stroke="#4458c8" stroke-width="1" stroke-linejoin="round"/><path d="M1 11.8 Q0.8 9.5 2 8.4 Q3 7.2 4.1 8.4 Q5.3 9.5 5.1 11.8Z" fill="#e8b848" stroke="#c89030" stroke-width="0.6"/></svg><div class="a ui" id="tree23" style="left:32.20px;top:528.333px;letter-spacing:-0.563px;color:#1a1a1a">MSP430_GUIComposer_JSON</div><svg style="left:4px;top:550px" width="6" height="8" viewBox="0 0 6 8"><path d="M1.2 0.8 L4.4 4 L1.2 7.2" stroke="#9a9a9a" stroke-width="1.1" fill="none"/></svg><svg style="left:17px;top:547px" width="12" height="12" viewBox="0 0 12 12"><path d="M1.6 4.2 V10.3" stroke="#5060c8" stroke-width="1"/><circle cx="1.3" cy="4.3" r="0.7" fill="#7a4870"/><path d="M2.2 10.5 V4 L3.8 2.2 H9.5 V7.5 H4Z" fill="#fce8a4"/><path d="M2.2 10 V4 L3.8 2.2" stroke="#e8c880" stroke-width="0.6" fill="none"/><g stroke="#7aa2d4" stroke-width="0.9" fill="none"><path d="M6.2 1.3 H4.9 V3.9 H6.2"/><path d="M8.4 1.3 H7.1 V3.9 H8.4"/><path d="M10.8 1.3 H9.4 V2.6 H10.5 V3.9 H9.2"/></g><path d="M2.6 10.4 H8.6 L11 6.9 H4.4Z" fill="#aee0fa" stroke="#4458c8" stroke-width="1" stroke-linejoin="round"/></svg><div class="a ui" id="tree24" style="left:32.20px;top:547.000px;letter-spacing:-0.145px;color:#1a1a1a">msp430f5529_test_code</div><svg style="left:4px;top:569px" width="6" height="8" viewBox="0 0 6 8"><path d="M1.2 0.8 L4.4 4 L1.2 7.2" stroke="#9a9a9a" stroke-width="1.1" fill="none"/></svg><svg style="left:17px;top:566px" width="12" height="12" viewBox="0 0 12 12"><path d="M1.6 4.2 V10.3" stroke="#5060c8" stroke-width="1"/><circle cx="1.3" cy="4.3" r="0.7" fill="#7a4870"/><path d="M2.2 10.5 V4 L3.8 2.2 H9.5 V7.5 H4Z" fill="#fce8a4"/><path d="M2.2 10 V4 L3.8 2.2" stroke="#e8c880" stroke-width="0.6" fill="none"/><g stroke="#7aa2d4" stroke-width="0.9" fill="none"><path d="M6.2 1.3 H4.9 V3.9 H6.2"/><path d="M8.4 1.3 H7.1 V3.9 H8.4"/><path d="M10.8 1.3 H9.4 V2.6 H10.5 V3.9 H9.2"/></g><path d="M2.6 10.4 H8.6 L11 6.9 H4.4Z" fill="#aee0fa" stroke="#4458c8" stroke-width="1" stroke-linejoin="round"/></svg><div class="a ui" id="tree25" style="left:32.20px;top:565.667px;letter-spacing:-0.090px;color:#1a1a1a">msp430fr2311_test_code</div><svg style="left:4px;top:587px" width="6" height="8" viewBox="0 0 6 8"><path d="M1.2 0.8 L4.4 4 L1.2 7.2" stroke="#9a9a9a" stroke-width="1.1" fill="none"/></svg><svg style="left:17px;top:584px" width="12" height="12" viewBox="0 0 12 12"><path d="M1.6 4.2 V10.3" stroke="#5060c8" stroke-width="1"/><circle cx="1.3" cy="4.3" r="0.7" fill="#7a4870"/><path d="M2.2 10.5 V4 L3.8 2.2 H9.5 V7.5 H4Z" fill="#fce8a4"/><path d="M2.2 10 V4 L3.8 2.2" stroke="#e8c880" stroke-width="0.6" fill="none"/><g stroke="#7aa2d4" stroke-width="0.9" fill="none"><path d="M6.2 1.3 H4.9 V3.9 H6.2"/><path d="M8.4 1.3 H7.1 V3.9 H8.4"/><path d="M10.8 1.3 H9.4 V2.6 H10.5 V3.9 H9.2"/></g><path d="M2.6 10.4 H8.6 L11 6.9 H4.4Z" fill="#aee0fa" stroke="#4458c8" stroke-width="1" stroke-linejoin="round"/></svg><div class="a ui" id="tree26" style="left:32.20px;top:584.333px;letter-spacing:-0.124px;color:#1a1a1a">msp430fr2355_test</div><svg style="left:4px;top:606px" width="6" height="8" viewBox="0 0 6 8"><path d="M1.2 0.8 L4.4 4 L1.2 7.2" stroke="#9a9a9a" stroke-width="1.1" fill="none"/></svg><svg style="left:17px;top:603px" width="12" height="12" viewBox="0 0 12 12"><path d="M1.6 4.2 V10.3" stroke="#5060c8" stroke-width="1"/><circle cx="1.3" cy="4.3" r="0.7" fill="#7a4870"/><path d="M2.2 10.5 V4 L3.8 2.2 H9.5 V7.5 H4Z" fill="#fce8a4"/><path d="M2.2 10 V4 L3.8 2.2" stroke="#e8c880" stroke-width="0.6" fill="none"/><g stroke="#7aa2d4" stroke-width="0.9" fill="none"><path d="M6.2 1.3 H4.9 V3.9 H6.2"/><path d="M8.4 1.3 H7.1 V3.9 H8.4"/><path d="M10.8 1.3 H9.4 V2.6 H10.5 V3.9 H9.2"/></g><path d="M2.6 10.4 H8.6 L11 6.9 H4.4Z" fill="#aee0fa" stroke="#4458c8" stroke-width="1" stroke-linejoin="round"/></svg><div class="a ui" id="tree27" style="left:32.20px;top:603.000px;letter-spacing:-0.138px;color:#1a1a1a">msp430fr2433_test_code</div><svg style="left:4px;top:625px" width="6" height="8" viewBox="0 0 6 8"><path d="M1.2 0.8 L4.4 4 L1.2 7.2" stroke="#9a9a9a" stroke-width="1.1" fill="none"/></svg><svg style="left:17px;top:622px" width="12" height="12" viewBox="0 0 12 12"><path d="M1.6 4.2 V10.3" stroke="#5060c8" stroke-width="1"/><circle cx="1.3" cy="4.3" r="0.7" fill="#7a4870"/><path d="M2.2 10.5 V4 L3.8 2.2 H9.5 V7.5 H4Z" fill="#fce8a4"/><path d="M2.2 10 V4 L3.8 2.2" stroke="#e8c880" stroke-width="0.6" fill="none"/><g stroke="#7aa2d4" stroke-width="0.9" fill="none"><path d="M6.2 1.3 H4.9 V3.9 H6.2"/><path d="M8.4 1.3 H7.1 V3.9 H8.4"/><path d="M10.8 1.3 H9.4 V2.6 H10.5 V3.9 H9.2"/></g><path d="M2.6 10.4 H8.6 L11 6.9 H4.4Z" fill="#aee0fa" stroke="#4458c8" stroke-width="1" stroke-linejoin="round"/></svg><div class="a ui" id="tree28" style="left:32.20px;top:621.667px;letter-spacing:-0.138px;color:#1a1a1a">msp430fr5969_test_code</div><svg style="left:4px;top:643px" width="6" height="8" viewBox="0 0 6 8"><path d="M1.2 0.8 L4.4 4 L1.2 7.2" stroke="#9a9a9a" stroke-width="1.1" fill="none"/></svg><svg style="left:17px;top:640px" width="12" height="12" viewBox="0 0 12 12"><path d="M1.6 4.2 V10.3" stroke="#5060c8" stroke-width="1"/><circle cx="1.3" cy="4.3" r="0.7" fill="#7a4870"/><path d="M2.2 10.5 V4 L3.8 2.2 H9.5 V7.5 H4Z" fill="#fce8a4"/><path d="M2.2 10 V4 L3.8 2.2" stroke="#e8c880" stroke-width="0.6" fill="none"/><g stroke="#7aa2d4" stroke-width="0.9" fill="none"><path d="M6.2 1.3 H4.9 V3.9 H6.2"/><path d="M8.4 1.3 H7.1 V3.9 H8.4"/><path d="M10.8 1.3 H9.4 V2.6 H10.5 V3.9 H9.2"/></g><path d="M2.6 10.4 H8.6 L11 6.9 H4.4Z" fill="#aee0fa" stroke="#4458c8" stroke-width="1" stroke-linejoin="round"/></svg><div class="a ui" id="tree29" style="left:32.20px;top:640.333px;letter-spacing:-0.138px;color:#1a1a1a">msp430fr5994_test_code</div><svg style="left:4px;top:662px" width="6" height="8" viewBox="0 0 6 8"><path d="M1.2 0.8 L4.4 4 L1.2 7.2" stroke="#9a9a9a" stroke-width="1.1" fill="none"/></svg><svg style="left:17px;top:659px" width="12" height="12" viewBox="0 0 12 12"><path d="M1.6 4.2 V10.3" stroke="#5060c8" stroke-width="1"/><circle cx="1.3" cy="4.3" r="0.7" fill="#7a4870"/><path d="M2.2 10.5 V4 L3.8 2.2 H9.5 V7.5 H4Z" fill="#fce8a4"/><path d="M2.2 10 V4 L3.8 2.2" stroke="#e8c880" stroke-width="0.6" fill="none"/><g stroke="#7aa2d4" stroke-width="0.9" fill="none"><path d="M6.2 1.3 H4.9 V3.9 H6.2"/><path d="M8.4 1.3 H7.1 V3.9 H8.4"/><path d="M10.8 1.3 H9.4 V2.6 H10.5 V3.9 H9.2"/></g><path d="M2.6 10.4 H8.6 L11 6.9 H4.4Z" fill="#aee0fa" stroke="#4458c8" stroke-width="1" stroke-linejoin="round"/></svg><div class="a ui" id="tree30" style="left:32.20px;top:659.000px;letter-spacing:-0.138px;color:#1a1a1a">msp430fr6989_test_code</div><svg style="left:4px;top:681px" width="6" height="8" viewBox="0 0 6 8"><path d="M1.2 0.8 L4.4 4 L1.2 7.2" stroke="#9a9a9a" stroke-width="1.1" fill="none"/></svg><svg style="left:17px;top:678px" width="12" height="12" viewBox="0 0 12 12"><path d="M1.6 4.2 V10.3" stroke="#5060c8" stroke-width="1"/><circle cx="1.3" cy="4.3" r="0.7" fill="#7a4870"/><path d="M2.2 10.5 V4 L3.8 2.2 H9.5 V7.5 H4Z" fill="#fce8a4"/><path d="M2.2 10 V4 L3.8 2.2" stroke="#e8c880" stroke-width="0.6" fill="none"/><g stroke="#7aa2d4" stroke-width="0.9" fill="none"><path d="M6.2 1.3 H4.9 V3.9 H6.2"/><path d="M8.4 1.3 H7.1 V3.9 H8.4"/><path d="M10.8 1.3 H9.4 V2.6 H10.5 V3.9 H9.2"/></g><path d="M2.6 10.4 H8.6 L11 6.9 H4.4Z" fill="#aee0fa" stroke="#4458c8" stroke-width="1" stroke-linejoin="round"/></svg><div class="a ui" id="tree31" style="left:32.20px;top:677.667px;letter-spacing:-0.479px;color:#1a1a1a">OutOfBox_MSP-EXP430FR2355</div><svg style="left:4px;top:699px" width="6" height="8" viewBox="0 0 6 8"><path d="M1.2 0.8 L4.4 4 L1.2 7.2" stroke="#9a9a9a" stroke-width="1.1" fill="none"/></svg><svg style="left:17px;top:696px" width="12" height="12" viewBox="0 0 12 12"><path d="M1.6 4.2 V10.3" stroke="#5060c8" stroke-width="1"/><circle cx="1.3" cy="4.3" r="0.7" fill="#7a4870"/><path d="M2.2 10.5 V4 L3.8 2.2 H9.5 V7.5 H4Z" fill="#fce8a4"/><path d="M2.2 10 V4 L3.8 2.2" stroke="#e8c880" stroke-width="0.6" fill="none"/><g stroke="#7aa2d4" stroke-width="0.9" fill="none"><path d="M6.2 1.3 H4.9 V3.9 H6.2"/><path d="M8.4 1.3 H7.1 V3.9 H8.4"/><path d="M10.8 1.3 H9.4 V2.6 H10.5 V3.9 H9.2"/></g><path d="M2.6 10.4 H8.6 L11 6.9 H4.4Z" fill="#aee0fa" stroke="#4458c8" stroke-width="1" stroke-linejoin="round"/><path d="M1 11.8 Q0.8 9.5 2 8.4 Q3 7.2 4.1 8.4 Q5.3 9.5 5.1 11.8Z" fill="#e8b848" stroke="#c89030" stroke-width="0.6"/></svg><div class="a ui" id="tree32" style="left:32.20px;top:696.333px;letter-spacing:-0.509px;color:#1a1a1a">RgbLedMixing_LPM_FR2433</div><svg style="left:4px;top:718px" width="6" height="8" viewBox="0 0 6 8"><path d="M1.2 0.8 L4.4 4 L1.2 7.2" stroke="#9a9a9a" stroke-width="1.1" fill="none"/></svg><svg style="left:17px;top:715px" width="12" height="12" viewBox="0 0 12 12"><path d="M1.6 4.2 V10.3" stroke="#5060c8" stroke-width="1"/><circle cx="1.3" cy="4.3" r="0.7" fill="#7a4870"/><path d="M2.2 10.5 V4 L3.8 2.2 H9.5 V7.5 H4Z" fill="#fce8a4"/><path d="M2.2 10 V4 L3.8 2.2" stroke="#e8c880" stroke-width="0.6" fill="none"/><g stroke="#7aa2d4" stroke-width="0.9" fill="none"><path d="M6.2 1.3 H4.9 V3.9 H6.2"/><path d="M8.4 1.3 H7.1 V3.9 H8.4"/><path d="M10.8 1.3 H9.4 V2.6 H10.5 V3.9 H9.2"/></g><path d="M2.6 10.4 H8.6 L11 6.9 H4.4Z" fill="#aee0fa" stroke="#4458c8" stroke-width="1" stroke-linejoin="round"/></svg><div class="a ui" id="tree33" style="left:32.20px;top:715.000px;letter-spacing:-0.554px;color:#1a1a1a">RgbLedMixing_LPM_FR2433_GUI</div><div class="a" style="left:481px;top:95px;width:3px;height:802px;background:linear-gradient(#fafafa,#e4e4e4)"></div><div class="a" style="left:484px;top:72px;width:1391px;height:825px;border-left:1px solid #d3dae8;border-top:1px solid #dde3f0;border-top-left-radius:3px;background:#fff"></div><div class="a" style="left:653px;top:73px;width:1222px;height:22px;background:linear-gradient(#e6ecfc,#d9dff0);border-bottom:1px solid #cfd6e6"></div><svg style="left:487px;top:79px" width="12" height="12" viewBox="0 0 12 12"><path d="M2.8 1.6 H7.3 L9.6 3.9 V10.6 H2.8Z" fill="#f0f6fd" stroke="#cbb07a" stroke-width="0.9" stroke-linejoin="round"/><path d="M7.3 1.6 V3.9 H9.6" fill="#e8c070" stroke="#d0a050" stroke-width="0.6"/><path d="M8 5.8 Q7.4 5.1 6.6 5.2 Q5 5.4 5 7.4 Q5 9.6 6.6 9.7 Q7.4 9.7 8 9.1" stroke="#4a80b8" stroke-width="1.4" fill="none"/><path d="M0.6 11.6 Q0.4 9.6 1.5 8.6 Q2.5 7.6 3.5 8.6 Q4.6 9.6 4.4 11.6Z" fill="#e8b848" stroke="#c89030" stroke-width="0.6"/></svg><div class="a ui" id="etab" style="left:500.60px;top:79.000px;letter-spacing:-0.610px;color:#1a1a1a">MCT8316Z0R_GUI_Code.c</div><svg style="left:641.8px;top:80.8px" width="8" height="8" viewBox="0 0 8 8"><path d="M0.7 1.9 L1.9 0.7 L3.75 2.55 L5.6 0.7 L6.8 1.9 L4.95 3.75 L6.8 5.6 L5.6 6.8 L3.75 4.95 L1.9 6.8 L0.7 5.6 L2.55 3.75Z" fill="#fff" stroke="#7a7a7a" stroke-width="1.25" stroke-linejoin="round"/></svg><div class="a" style="left:485px;top:96px;width:9px;height:801px;background:#f7f7f7"></div><div class="a" style="left:494px;top:96px;width:23px;height:801px;background:#fdfdfd"></div><div class="a ln" style="left:476px;top:98.000px">127</div><div class="a code" style="left:518px;top:98.000px"><span class="c">    //Preset Initializations</span></div><div class="a ln" style="left:476px;top:113.333px">128</div><div class="a code" style="left:518px;top:113.333px">    PwmSel = 1;</div><div class="a ln" style="left:476px;top:128.667px">129</div><div class="a code" style="left:518px;top:128.667px">    GUIComm_sendUInt8(<span class="s">"num_pol"</span>, 7, 4);</div><div class="a ln" style="left:476px;top:144.000px">130</div><div class="a" style="left:679.33px;top:155px;width:44.00px;height:3px;background-image:linear-gradient(90deg,#f4a0a0 0 1px,transparent 1px),linear-gradient(90deg,transparent 1px,#f4a0a0 1px 2px,transparent 2px 3px,#f4a0a0 3px),linear-gradient(90deg,transparent 2px,#f4a0a0 2px 3px,transparent 3px);background-size:4px 1px;background-repeat:repeat-x;background-position:0 0,0 1px,0 2px"></div><div class="a code" style="left:518px;top:144.000px">    GUIComm_sendBool(<span class="s">"<span>nsleep</span>"</span>, 6, 0);</div><div class="a ln" style="left:476px;top:159.333px">131</div><div class="a code" style="left:518px;top:159.333px"></div><div class="a ln" style="left:476px;top:174.667px">132</div><div class="a code" style="left:518px;top:174.667px">    <span class="m">__bis_SR_register</span>(LPM0_bits | GIE); <span class="c">// Enter LPM0 w/interrupt</span></div><div class="a ln" style="left:476px;top:190.000px">133</div><div class="a code" style="left:518px;top:190.000px">    <span class="m">__enable_interrupt</span>();</div><div class="a ln" style="left:476px;top:205.333px">134</div><div class="a code" style="left:518px;top:205.333px"></div><div class="a ln" style="left:476px;top:220.667px">135</div><div class="a code" style="left:518px;top:220.667px">    <span class="k">while</span> (1)</div><div class="a ln" style="left:476px;top:236.000px">136</div><div class="a code" style="left:518px;top:236.000px">    {</div><div class="a ln" style="left:476px;top:251.333px">137</div><div class="a code" style="left:518px;top:251.333px">        count++;</div><div class="a ln" style="left:476px;top:266.667px">138</div><div class="a code" style="left:518px;top:266.667px">        ADCCTL0 |= ADCENC | ADCSC;            <span class="c">// Sampling and conversion start</span></div><div class="a ln" style="left:476px;top:282.000px">139</div><div class="a code" style="left:518px;top:282.000px"></div><div class="a ln" style="left:476px;top:297.333px">140</div><div class="a code" style="left:518px;top:297.333px"><span class="c">        //ADC-PWM flag</span></div><div class="a ln" style="left:476px;top:312.667px">141</div><div class="a code" style="left:518px;top:312.667px">        <span class="k">if</span> (adc_flag == <span class="k">true</span>){</div><div class="a ln" style="left:476px;top:328.000px">142</div><div class="a code" style="left:518px;top:328.000px">            adc_flag = <span class="k">false</span>;</div><div class="a ln" style="left:476px;top:343.333px">143</div><div class="a code" style="left:518px;top:343.333px">            <span class="k">if</span> (PwmSel == 1)</div><div class="a ln" style="left:476px;top:358.667px">144</div><div class="a code" style="left:518px;top:358.667px">            {</div><div class="a ln" style="left:476px;top:374.000px">145</div><div class="a" style="left:487px;top:375.000px;width:3px;height:8px"><div style="position:absolute;left:0.5px;top:0;width:2px;height:2px;background:#2d4fb8;border-radius:1px"></div><div style="position:absolute;left:0.5px;top:3px;width:2px;height:5px;background:#2d4fb8"></div></div><div class="a" style="left:635.33px;top:385px;width:212.67px;height:3px;background-image:linear-gradient(90deg,#c8d3e6 0 1px,transparent 1px),linear-gradient(90deg,transparent 1px,#c8d3e6 1px 2px,transparent 2px 3px,#c8d3e6 3px),linear-gradient(90deg,transparent 2px,#c8d3e6 2px 3px,transparent 3px);background-size:4px 1px;background-repeat:repeat-x;background-position:0 0,0 1px,0 2px"></div><div class="a code" style="left:518px;top:374.000px">                <span>TB1CCR1=(<span class="k">int</span>)(ADC_Result/10);</span></div><div class="a ln" style="left:476px;top:389.333px">146</div><div class="a code" style="left:518px;top:389.333px">            }</div><div class="a ln" style="left:476px;top:404.667px">147</div><div class="a code" style="left:518px;top:404.667px">            <span class="k">else</span></div><div class="a ln" style="left:476px;top:420.000px">148</div><div class="a code" style="left:518px;top:420.000px">            {</div><div class="a ln" style="left:476px;top:435.333px">149</div><div class="a" style="left:487px;top:436.333px;width:3px;height:8px"><div style="position:absolute;left:0.5px;top:0;width:2px;height:2px;background:#2d4fb8;border-radius:1px"></div><div style="position:absolute;left:0.5px;top:3px;width:2px;height:5px;background:#2d4fb8"></div></div><div class="a" style="left:635.33px;top:446px;width:198.00px;height:3px;background-image:linear-gradient(90deg,#c8d3e6 0 1px,transparent 1px),linear-gradient(90deg,transparent 1px,#c8d3e6 1px 2px,transparent 2px 3px,#c8d3e6 3px),linear-gradient(90deg,transparent 2px,#c8d3e6 2px 3px,transparent 3px);background-size:4px 1px;background-repeat:repeat-x;background-position:0 0,0 1px,0 2px"></div><div class="a code" style="left:518px;top:435.333px">                <span>TB1CCR1=(<span class="k">int</span>)(PwmDuty*4.0);</span></div><div class="a ln" style="left:476px;top:450.667px">150</div><div class="a code" style="left:518px;top:450.667px">            }</div><div class="a ln" style="left:476px;top:466.000px">151</div><div class="a" style="left:487px;top:467.000px;width:3px;height:8px"><div style="position:absolute;left:0.5px;top:0;width:2px;height:2px;background:#2d4fb8;border-radius:1px"></div><div style="position:absolute;left:0.5px;top:3px;width:2px;height:5px;background:#2d4fb8"></div></div><div class="a" style="left:606.00px;top:477px;width:146.67px;height:3px;background-image:linear-gradient(90deg,#c8d3e6 0 1px,transparent 1px),linear-gradient(90deg,transparent 1px,#c8d3e6 1px 2px,transparent 2px 3px,#c8d3e6 3px),linear-gradient(90deg,transparent 2px,#c8d3e6 2px 3px,transparent 3px);background-size:4px 1px;background-repeat:repeat-x;background-position:0 0,0 1px,0 2px"></div><div class="a code" style="left:518px;top:466.000px">            <span>old_PWM_DC = PWM_DC;</span></div><div class="a ln" style="left:476px;top:481.333px">152</div><div class="a code" style="left:518px;top:481.333px"><span class="c">            //PWM_DC = (float)(((float)(TB1CCR1)*100.0)/(float)(TB1CCR0));</span></div><div class="a ln" style="left:476px;top:496.667px">153</div><div class="a" style="left:487px;top:497.667px;width:3px;height:8px"><div style="position:absolute;left:0.5px;top:0;width:2px;height:2px;background:#2d4fb8;border-radius:1px"></div><div style="position:absolute;left:0.5px;top:3px;width:2px;height:5px;background:#2d4fb8"></div></div><div class="a" style="left:606.00px;top:508px;width:374.00px;height:3px;background-image:linear-gradient(90deg,#c8d3e6 0 1px,transparent 1px),linear-gradient(90deg,transparent 1px,#c8d3e6 1px 2px,transparent 2px 3px,#c8d3e6 3px),linear-gradient(90deg,transparent 2px,#c8d3e6 2px 3px,transparent 3px);background-size:4px 1px;background-repeat:repeat-x;background-position:0 0,0 1px,0 2px"></div><div class="a code" style="left:518px;top:496.667px">            <span>PWM_DC = (<span class="k">float</span>)((<span class="k">float</span>)(ADC_Result)*1.0175/40.96);</span></div><div class="a ln" style="left:476px;top:512.000px">154</div><div class="a" style="left:487px;top:513.000px;width:3px;height:8px"><div style="position:absolute;left:0.5px;top:0;width:2px;height:2px;background:#2d4fb8;border-radius:1px"></div><div style="position:absolute;left:0.5px;top:3px;width:2px;height:5px;background:#2d4fb8"></div></div><div class="a" style="left:606.00px;top:523px;width:139.33px;height:3px;background-image:linear-gradient(90deg,#c8d3e6 0 1px,transparent 1px),linear-gradient(90deg,transparent 1px,#c8d3e6 1px 2px,transparent 2px 3px,#c8d3e6 3px),linear-gradient(90deg,transparent 2px,#c8d3e6 2px 3px,transparent 3px);background-size:4px 1px;background-repeat:repeat-x;background-position:0 0,0 1px,0 2px"></div><div class="a code" style="left:518px;top:512.000px">            <span><span class="k">if</span> (PWM_DC &gt; 100.0)</span></div><div class="a ln" style="left:476px;top:527.333px">155</div><div class="a code" style="left:518px;top:527.333px">            {</div><div class="a ln" style="left:476px;top:542.667px">156</div><div class="a" style="left:487px;top:543.667px;width:3px;height:8px"><div style="position:absolute;left:0.5px;top:0;width:2px;height:2px;background:#2d4fb8;border-radius:1px"></div><div style="position:absolute;left:0.5px;top:3px;width:2px;height:5px;background:#2d4fb8"></div></div><div class="a" style="left:635.33px;top:554px;width:110.00px;height:3px;background-image:linear-gradient(90deg,#c8d3e6 0 1px,transparent 1px),linear-gradient(90deg,transparent 1px,#c8d3e6 1px 2px,transparent 2px 3px,#c8d3e6 3px),linear-gradient(90deg,transparent 2px,#c8d3e6 2px 3px,transparent 3px);background-size:4px 1px;background-repeat:repeat-x;background-position:0 0,0 1px,0 2px"></div><div class="a code" style="left:518px;top:542.667px">                <span>PWM_DC = 100.0;</span></div><div class="a ln" style="left:476px;top:558.000px">157</div><div class="a code" style="left:518px;top:558.000px">            }</div><div class="a ln" style="left:476px;top:573.333px">158</div><div class="a code" style="left:518px;top:573.333px"></div><div class="a ln" style="left:476px;top:588.667px">159</div><div class="a" style="left:487px;top:589.667px;width:3px;height:8px"><div style="position:absolute;left:0.5px;top:0;width:2px;height:2px;background:#2d4fb8;border-radius:1px"></div><div style="position:absolute;left:0.5px;top:3px;width:2px;height:5px;background:#2d4fb8"></div></div><div class="a" style="left:606.00px;top:600px;width:183.33px;height:3px;background-image:linear-gradient(90deg,#c8d3e6 0 1px,transparent 1px),linear-gradient(90deg,transparent 1px,#c8d3e6 1px 2px,transparent 2px 3px,#c8d3e6 3px),linear-gradient(90deg,transparent 2px,#c8d3e6 2px 3px,transparent 3px);background-size:4px 1px;background-repeat:repeat-x;background-position:0 0,0 1px,0 2px"></div><div class="a code" style="left:518px;top:588.667px">            <span><span class="k">if</span> (PWM_DC != old_PWM_DC)</span></div><div class="a ln" style="left:476px;top:604.000px">160</div><div class="a code" style="left:518px;top:604.000px">            {</div><div class="a ln" style="left:476px;top:619.333px">161</div><div class="a" style="left:487px;top:620.333px;width:3px;height:8px"><div style="position:absolute;left:0.5px;top:0;width:2px;height:2px;background:#2d4fb8;border-radius:1px"></div><div style="position:absolute;left:0.5px;top:3px;width:2px;height:5px;background:#2d4fb8"></div></div><div class="a" style="left:635.33px;top:630px;width:374.00px;height:3px;background-image:linear-gradient(90deg,#c8d3e6 0 1px,transparent 1px),linear-gradient(90deg,transparent 1px,#c8d3e6 1px 2px,transparent 2px 3px,#c8d3e6 3px),linear-gradient(90deg,transparent 2px,#c8d3e6 2px 3px,transparent 3px);background-size:4px 1px;background-repeat:repeat-x;background-position:0 0,0 1px,0 2px"></div><div class="a code" style="left:518px;top:619.333px">                <span>GUIComm_sendInt16(<span class="s">"pwm_dc"</span>, 6, (<span class="t">_q5</span>)(PWM_DC*32.0));</span></div><div class="a ln" style="left:476px;top:634.667px">162</div><div class="a code" style="left:518px;top:634.667px">            }</div><div class="a ln" style="left:476px;top:650.000px">163</div><div class="a code" style="left:518px;top:650.000px">        }</div><div class="a ln" style="left:476px;top:665.333px">164</div><div class="a code" style="left:518px;top:665.333px"></div><div class="a ln" style="left:476px;top:680.667px">165</div><div class="a code" style="left:518px;top:680.667px"><span class="c">        //FGOUT and Motor Speed</span></div><div class="a ln" style="left:476px;top:696.000px">166</div><div class="a code" style="left:518px;top:696.000px">        <span class="k">if</span> (fgout_flag == <span class="k">true</span>){</div><div class="a ln" style="left:476px;top:711.333px">167</div><div class="a code" style="left:518px;top:711.333px">            fgout_flag = <span class="k">false</span>;</div><div class="a ln" style="left:476px;top:726.667px">168</div><div class="a" style="left:487px;top:727.667px;width:3px;height:8px"><div style="position:absolute;left:0.5px;top:0;width:2px;height:2px;background:#2d4fb8;border-radius:1px"></div><div style="position:absolute;left:0.5px;top:3px;width:2px;height:5px;background:#2d4fb8"></div></div><div class="a" style="left:606.00px;top:738px;width:462.00px;height:3px;background-image:linear-gradient(90deg,#c8d3e6 0 1px,transparent 1px),linear-gradient(90deg,transparent 1px,#c8d3e6 1px 2px,transparent 2px 3px,#c8d3e6 3px),linear-gradient(90deg,transparent 2px,#c8d3e6 2px 3px,transparent 3px);background-size:4px 1px;background-repeat:repeat-x;background-position:0 0,0 1px,0 2px"></div><div class="a code" style="left:518px;top:726.667px">            <span>FGOUT_freq = (<span class="k">float</span>)(32500.0*(<span class="k">float</span>)(FGOUT_DIV)/(<span class="k">float</span>)(diff));</span></div><div class="a ln" style="left:476px;top:742.000px">169</div><div class="a" style="left:487px;top:743.000px;width:3px;height:8px"><div style="position:absolute;left:0.5px;top:0;width:2px;height:2px;background:#2d4fb8;border-radius:1px"></div><div style="position:absolute;left:0.5px;top:3px;width:2px;height:5px;background:#2d4fb8"></div></div><div class="a" style="left:606.00px;top:753px;width:425.33px;height:3px;background-image:linear-gradient(90deg,#c8d3e6 0 1px,transparent 1px),linear-gradient(90deg,transparent 1px,#c8d3e6 1px 2px,transparent 2px 3px,#c8d3e6 3px),linear-gradient(90deg,transparent 2px,#c8d3e6 2px 3px,transparent 3px);background-size:4px 1px;background-repeat:repeat-x;background-position:0 0,0 1px,0 2px"></div><div class="a code" style="left:518px;top:742.000px">            <span>commSpeed = (<span class="k">float</span>)((121.0*FGOUT_freq)/((<span class="k">float</span>)NumPoles));</span></div><div class="a ln" style="left:476px;top:757.333px">170</div><div class="a" style="left:487px;top:758.333px;width:3px;height:8px"><div style="position:absolute;left:0.5px;top:0;width:2px;height:2px;background:#2d4fb8;border-radius:1px"></div><div style="position:absolute;left:0.5px;top:3px;width:2px;height:5px;background:#2d4fb8"></div></div><div class="a" style="left:606.00px;top:768px;width:403.33px;height:3px;background-image:linear-gradient(90deg,#c8d3e6 0 1px,transparent 1px),linear-gradient(90deg,transparent 1px,#c8d3e6 1px 2px,transparent 2px 3px,#c8d3e6 3px),linear-gradient(90deg,transparent 2px,#c8d3e6 2px 3px,transparent 3px);background-size:4px 1px;background-repeat:repeat-x;background-position:0 0,0 1px,0 2px"></div><div class="a" style="left:745.33px;top:768px;width:36.67px;height:3px;background-image:linear-gradient(90deg,#f4a0a0 0 1px,transparent 1px),linear-gradient(90deg,transparent 1px,#f4a0a0 1px 2px,transparent 2px 3px,#f4a0a0 3px),linear-gradient(90deg,transparent 2px,#f4a0a0 2px 3px,transparent 3px);background-size:4px 1px;background-repeat:repeat-x;background-position:0 0,0 1px,0 2px"></div><div class="a code" style="left:518px;top:757.333px">            <span>GUIComm_sendInt16(<span class="s">"<span>fgout</span>"</span>, 5, (<span class="t">_q7</span>)(FGOUT_freq*129.5));</span></div><div class="a ln" style="left:476px;top:772.667px">171</div><div class="a" style="left:752.67px;top:784px;width:22.00px;height:3px;background-image:linear-gradient(90deg,#f4a0a0 0 1px,transparent 1px),linear-gradient(90deg,transparent 1px,#f4a0a0 1px 2px,transparent 2px 3px,#f4a0a0 3px),linear-gradient(90deg,transparent 2px,#f4a0a0 2px 3px,transparent 3px);background-size:4px 1px;background-repeat:repeat-x;background-position:0 0,0 1px,0 2px"></div><div class="a code" style="left:518px;top:772.667px">            GUIComm_sendUInt16(<span class="s">"<span>rpm</span>"</span>, 3, (<span class="t">uint16_t</span>)(commSpeed));</div><div class="a ln" style="left:476px;top:788.000px">172</div><div class="a code" style="left:518px;top:788.000px">        }</div><div class="a ln" style="left:476px;top:803.333px">173</div><div class="a code" style="left:518px;top:803.333px"></div><div class="a ln" style="left:476px;top:818.667px">174</div><div class="a code" style="left:518px;top:818.667px"><span class="c">        //nSLEEP ON</span></div><div class="a ln" style="left:476px;top:834.000px">175</div><div class="a code" style="left:518px;top:834.000px">        <span class="k">if</span> (nSLEEP_on_flag == <span class="k">true</span> &amp;&amp; nSLEEP_off_flag == <span class="k">false</span>)</div><div class="a ln" style="left:476px;top:849.333px">176</div><div class="a code" style="left:518px;top:849.333px">        {</div><div class="a ln" style="left:476px;top:864.667px">177</div><div class="a" style="left:738.00px;top:876px;width:44.00px;height:3px;background-image:linear-gradient(90deg,#f4a0a0 0 1px,transparent 1px),linear-gradient(90deg,transparent 1px,#f4a0a0 1px 2px,transparent 2px 3px,#f4a0a0 3px),linear-gradient(90deg,transparent 2px,#f4a0a0 2px 3px,transparent 3px);background-size:4px 1px;background-repeat:repeat-x;background-position:0 0,0 1px,0 2px"></div><div class="a code" style="left:518px;top:864.667px">            GUIComm_sendBool(<span class="s">"<span>nsleep</span>"</span>, 6, 1);</div><div class="a ln" style="left:476px;top:880.000px">178</div><div class="a code" style="left:518px;top:880.000px">            P3OUT |= BIT2;</div><div class="a ln" style="left:476px;top:895.333px">179</div><div class="a code" style="left:518px;top:895.333px">        }</div></body></html>
